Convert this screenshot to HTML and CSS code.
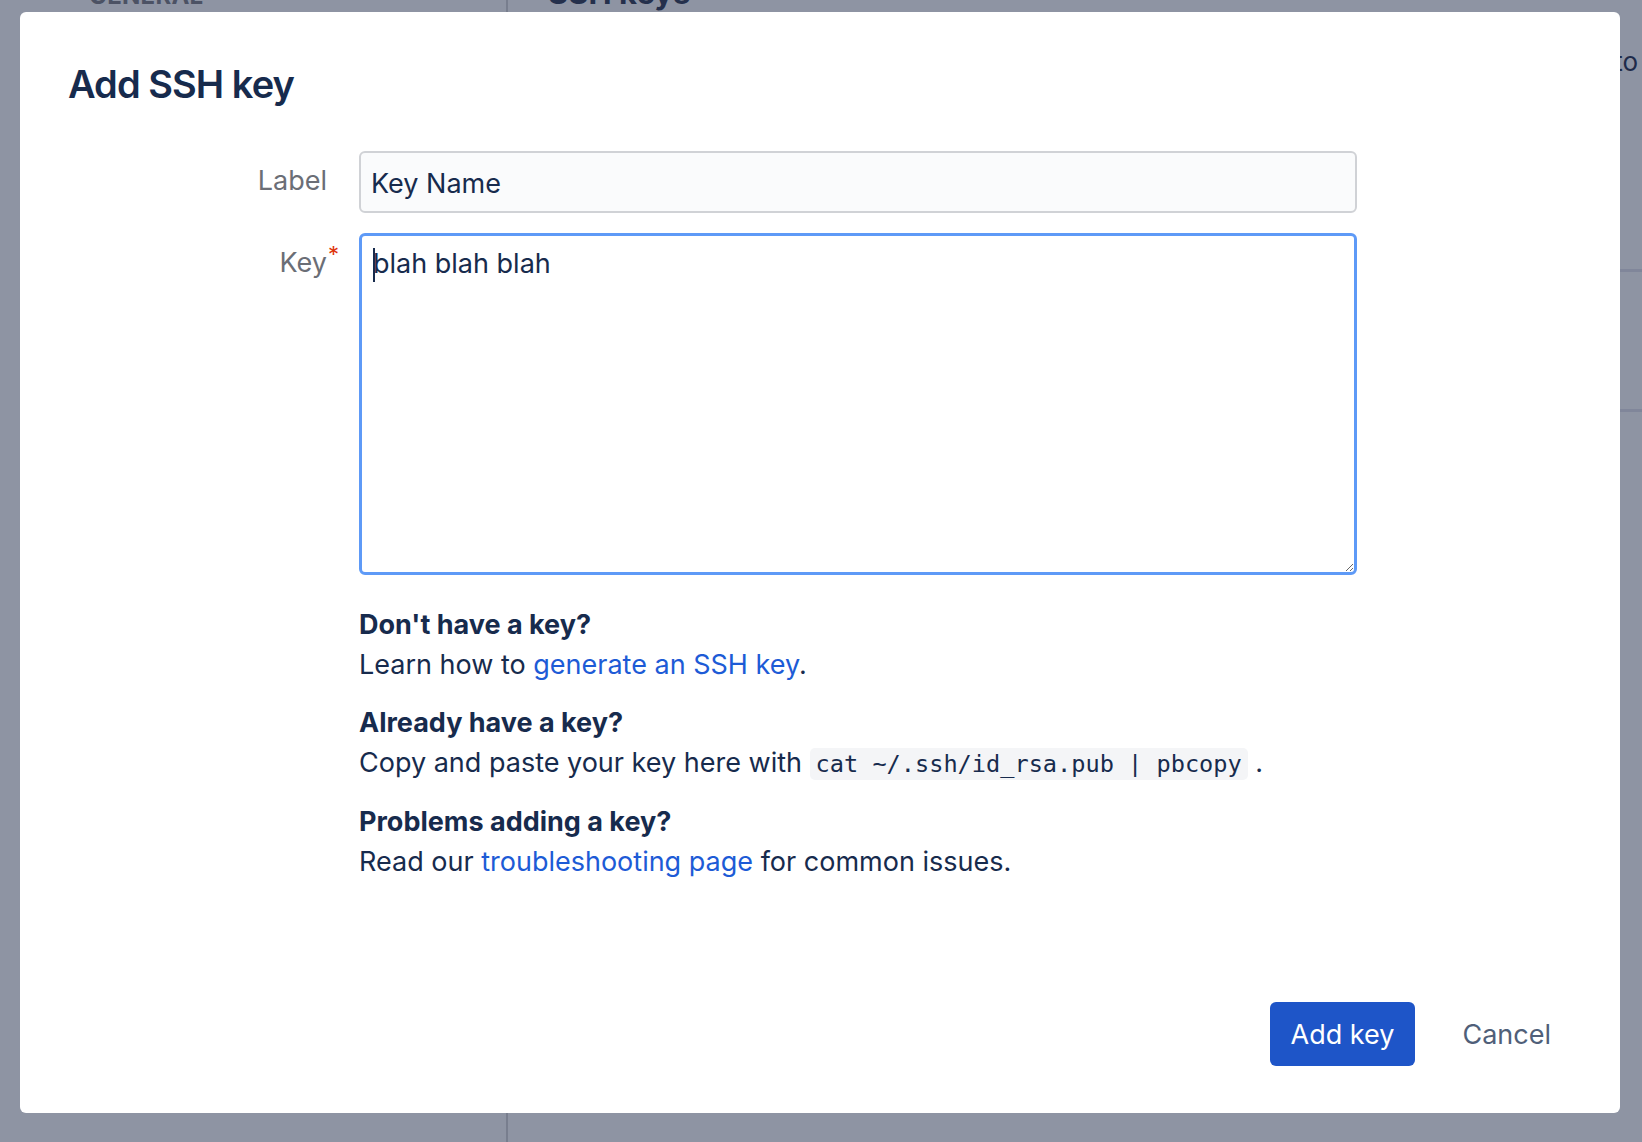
FILE: index.html
```html
<!DOCTYPE html>
<html lang="en">
<head>
<meta charset="utf-8">
<title>Add SSH key</title>
<link rel="stylesheet" href="styles.css">
</head>
<body>
<div class="page">
  <aside class="sidebar">
    <div class="side-heading">GENERAL</div>
  </aside>
  <main class="main">
    <div class="main-heading">SSH keys</div>
    <div class="main-row"><span class="main-text">to</span></div>
    <div class="rule rule-a"></div>
    <div class="rule rule-b"></div>
  </main>
</div>

<div class="modal" role="dialog" aria-labelledby="modal-title">
  <h1 class="modal-title" id="modal-title">Add SSH key</h1>
  <form class="form">
    <label class="field-label label-input" for="label">Label</label>
    <input class="text-input" id="label" type="text" value="Key Name">
    <label class="field-label label-key" for="key">Key<span class="req">*</span></label>
    <div class="area-wrap">
      <textarea class="key-area" id="key">blah blah blah</textarea>
      <span class="caret"></span>
    </div>
    <div class="help">
      <p class="help-head">Don't have a key?</p>
      <p class="help-text">Learn how to <a href="#">generate an SSH key</a>.</p>
      <p class="help-head gap">Already have a key?</p>
      <p class="help-text">Copy and paste your key here with <code>cat ~/.ssh/id_rsa.pub | pbcopy</code> .</p>
      <p class="help-head gap">Problems adding a key?</p>
      <p class="help-text">Read our <a href="#">troubleshooting page</a> for common issues.</p>
    </div>
  </form>
  <div class="footer">
    <button class="btn btn-primary" type="button">Add key</button>
    <button class="btn btn-subtle" type="button">Cancel</button>
  </div>
</div>
</body>
</html>
```

FILE: styles.css
```css
* { box-sizing: border-box; }

html, body {
  margin: 0;
  padding: 0;
  height: 100%;
}

body {
  background: #8e94a3;
  font-family: Inter, "Noto Sans", "Liberation Sans", sans-serif;
  color: #172b4d;
  overflow: hidden;
}

/* background page (dimmed) */
.page {
  display: grid;
  grid-template-columns: 508px 1fr;
  height: 100vh;
}

.sidebar {
  border-right: 2px solid #787e8e;
  padding-left: 89px;
}

.side-heading {
  font-size: 24px;
  font-weight: 700;
  line-height: 30px;
  margin-top: -19px;
  color: #4c5264;
  letter-spacing: 0.01em;
}

.main {
  padding-left: 40px;
}

.main-heading {
  font-size: 31px;
  font-weight: 700;
  line-height: 36px;
  margin-top: -25px;
  color: #25304c;
}

.main-row {
  display: flex;
  justify-content: flex-end;
  margin-top: 36px;
  padding-right: 4px;
  height: 30px;
}

.main-text {
  font-size: 26px;
  line-height: 30px;
  color: #1e2b4a;
}

.rule {
  height: 3px;
  background: #80869a;
}

.rule-a { margin-top: 192px; }
.rule-b { margin-top: 137px; }

/* modal */
.modal {
  position: absolute;
  left: 20px;
  top: 12px;
  width: 1600px;
  height: 1101px;
  background: #ffffff;
  border-radius: 6px;
  display: flex;
  flex-direction: column;
  padding: 49px 0 47px 0;
}

.modal-title {
  margin: 0 0 0 48px;
  font-size: 38px;
  line-height: 46px;
  font-weight: 600;
  letter-spacing: -0.025em;
  color: #172b4d;
}

.form {
  display: grid;
  grid-template-columns: 307px 998px;
  column-gap: 32px;
  row-gap: 20px;
  margin-top: 44px;
}

.field-label {
  text-align: right;
  font-size: 27px;
  line-height: 33px;
  color: #6b6e76;
  position: relative;
}

.label-input { padding-top: 13px; }
.label-key { padding-top: 13px; }

.req {
  position: absolute;
  right: -12px;
  top: 10px;
  font-size: 22px;
  line-height: 22px;
  color: #de350b;
}

.text-input {
  height: 62px;
  width: 100%;
  border: 2px solid #d0d2d6;
  border-radius: 6px;
  background: #fafbfc;
  padding: 3px 10px 0 10px;
  font-family: inherit;
  font-size: 27px;
  color: #172b4d;
  outline: none;
}

.area-wrap {
  position: relative;
}

.key-area {
  display: block;
  width: 100%;
  height: 342px;
  border: 3px solid #5e9af7;
  border-radius: 6px;
  background: #ffffff;
  padding: 11px 11px;
  font-family: inherit;
  font-size: 27px;
  line-height: 33px;
  color: #172b4d;
  outline: none;
  resize: vertical;
}

.caret {
  position: absolute;
  left: 14px;
  top: 15px;
  width: 2px;
  height: 34px;
  background: #172b4d;
}

.help {
  grid-column: 2;
  margin-top: 10px;
}

.help p {
  margin: 0;
  font-size: 27px;
  line-height: 40px;
  color: #172b4d;
}

.help-head { font-weight: 700; }
.help-head.gap { margin-top: 18px; }

.help a {
  color: #1d5bd6;
  text-decoration: none;
}

.help code {
  font-family: "DejaVu Sans Mono", "Liberation Mono", monospace;
  font-size: 23.6px;
  background: #f4f5f7;
  border-radius: 5px;
  padding: 2px 6px;
  color: #172b4d;
}

.footer {
  margin-top: auto;
  display: flex;
  justify-content: flex-end;
  gap: 26px;
  padding-right: 48px;
}

.btn {
  height: 64px;
  border: none;
  border-radius: 6px;
  padding: 0 21px;
  font-family: inherit;
  font-size: 27px;
  cursor: pointer;
}

.btn-primary {
  background: #1e55c8;
  color: #ffffff;
}

.btn-subtle {
  background: transparent;
  color: #505f79;
}
```
